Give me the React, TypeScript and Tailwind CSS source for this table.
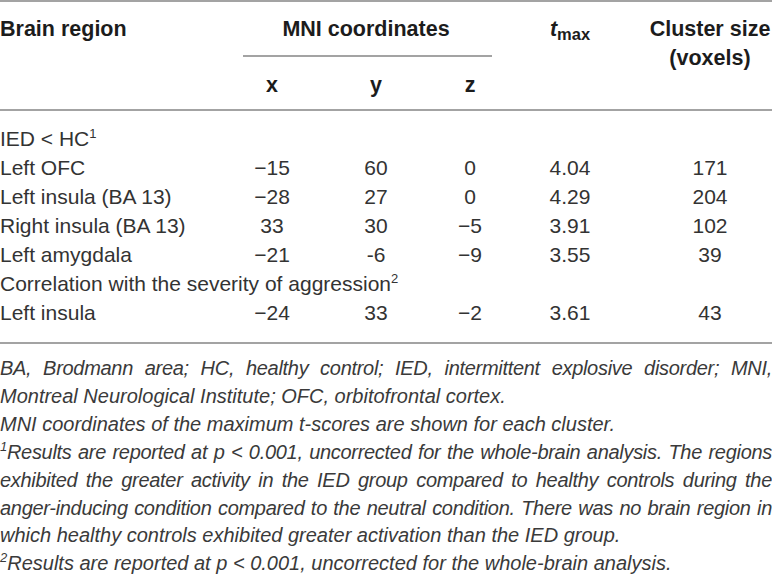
const rows = [
  { region: "Left OFC", x: "−15", y: "60", z: "0", t: "4.04", size: "171" },
  { region: "Left insula (BA 13)", x: "−28", y: "27", z: "0", t: "4.29", size: "204" },
  { region: "Right insula (BA 13)", x: "33", y: "30", z: "−5", t: "3.91", size: "102" },
  { region: "Left amygdala", x: "−21", y: "-6", z: "−9", t: "3.55", size: "39" },
];

const corrRows = [{ region: "Left insula", x: "−24", y: "33", z: "−2", t: "3.61", size: "43" }];

const cols = "grid grid-cols-[222px_100px_108px_80px_120px_142px]";

function Sup({ children }: { children: React.ReactNode }) {
  return <sup className="-top-[8px] text-[13px] leading-none">{children}</sup>;
}

function DataRow({ r }: { r: (typeof rows)[number] }) {
  return (
    <div className={`${cols} h-[29px] leading-[29px]`}>
      <div>{r.region}</div>
      <div className="text-center">{r.x}</div>
      <div className="text-center">{r.y}</div>
      <div className="text-center">{r.z}</div>
      <div className="text-center">{r.t}</div>
      <div className="pl-[18px] text-center">{r.size}</div>
    </div>
  );
}

// non-final lines of a justified paragraph
function JLine({ children }: { children: React.ReactNode }) {
  return <div className="text-justify tracking-[-0.3px] [text-align-last:justify]">{children}</div>;
}

export default function App() {
  return (
    <div className="h-[577px] w-[772px] overflow-hidden bg-white font-['Liberation_Sans',Arial,sans-serif]">
      {/* header */}
      <div className="border-t-2 border-b-2 border-[#a3a3a3] pt-[13px] pb-[9px] text-[21.5px] font-bold text-[#1c1c1c]">
        <div className={`${cols} grid-rows-[56px_29px] leading-[29px]`}>
          <div>Brain region</div>
          <div className="col-span-3 text-center">
            <div>MNI coordinates</div>
            <div className="mt-[11px] mr-[18px] ml-[21px] border-b-2 border-[#a3a3a3]" />
          </div>
          <div className="text-center">
            <span className="italic">t</span>
            <span className="relative top-[4px] text-[16.5px]">max</span>
          </div>
          <div className="whitespace-nowrap pl-[18px] text-center">
            Cluster size
            <br />
            (voxels)
          </div>
          <div />
          <div className="text-center">x</div>
          <div className="text-center">y</div>
          <div className="text-center">z</div>
        </div>
      </div>

      {/* body */}
      <div className="border-b-2 border-[#a3a3a3] pt-[13px] pb-[15px] text-[21px] text-[#333333]">
        <div className="h-[29px] leading-[29px]">
          IED &lt; HC<Sup>1</Sup>
        </div>
        {rows.map((r) => (
          <DataRow key={r.region} r={r} />
        ))}
        <div className="h-[29px] leading-[29px]">
          Correlation with the severity of aggression<Sup>2</Sup>
        </div>
        {corrRows.map((r) => (
          <DataRow key={r.region} r={r} />
        ))}
      </div>

      {/* footnotes */}
      <div className="pt-[11px] text-[20px] italic leading-[27.9px] text-[#3a3a3a]">
        <JLine>BA, Brodmann area; HC, healthy control; IED, intermittent explosive disorder; MNI,</JLine>
        <div>Montreal Neurological Institute; OFC, orbitofrontal cortex.</div>
        <div>MNI coordinates of the maximum t-scores are shown for each cluster.</div>
        <JLine>
          <Sup>1</Sup>Results are reported at p &lt; 0.001, uncorrected for the whole-brain analysis. The regions
        </JLine>
        <JLine>exhibited the greater activity in the IED group compared to healthy controls during the</JLine>
        <JLine>anger-inducing condition compared to the neutral condition. There was no brain region in</JLine>
        <div>which healthy controls exhibited greater activation than the IED group.</div>
        <div>
          <Sup>2</Sup>Results are reported at p &lt; 0.001, uncorrected for the whole-brain analysis.
        </div>
      </div>
    </div>
  );
}
